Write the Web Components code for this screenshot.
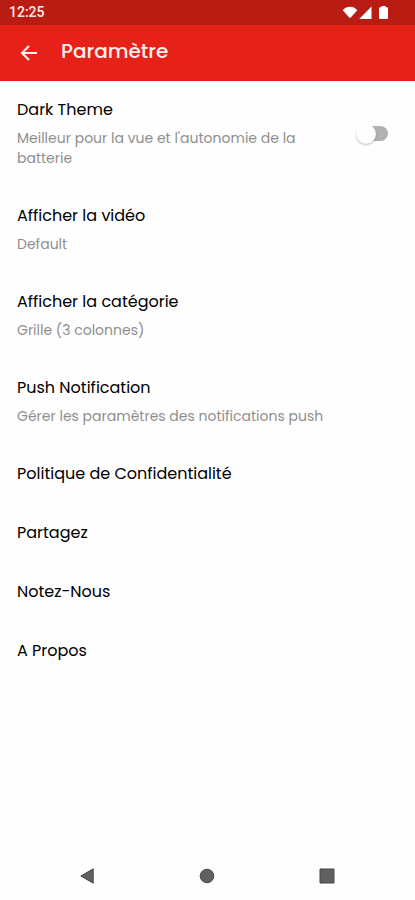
<!DOCTYPE html>
<html lang="fr">
<head>
<meta charset="utf-8">
<meta name="viewport" content="width=device-width, initial-scale=1">
<title>Paramètre</title>
<style>
body { margin: 0; background: #fefefe; color: #000; font-family: Poppins, Inter, "Open Sans", sans-serif; }
</style>
</head>
<body>
<settings-screen></settings-screen>
<script>
const define = (name, html) => {
  const template = document.createElement('template');
  template.innerHTML = html;
  customElements.define(name, class extends HTMLElement {
    constructor() {
      super();
      this.attachShadow({ mode: 'open' }).append(template.content.cloneNode(true));
    }
  });
};

define('status-bar', `
<style>
:host { display: flex; align-items: center; justify-content: space-between; height: 25px; padding: 0 27px 0 9px; background: #b81c13; color: #ffe9e6; font: 500 14px/25px Roboto, sans-serif; }
svg { display: block; }
</style>
<span>12:25</span>
<svg width="46" height="15" viewBox="0 0 46 15" fill="#fff" aria-hidden="true">
  <path d="M.7 5.2C4.7 .7 11.3 .7 15.3 5.2L9 12.2Q8 13.3 7 12.2Z"/>
  <path d="M29.5 1.5V14H17.2Z"/>
  <path d="M38 2.2h1.5V1h4v1.2H45q1 0 1 1V13q0 1-1 1h-7q-1 0-1-1V3.2q0-1 1-1Z"/>
</svg>`);

define('app-bar', `
<style>
:host { display: flex; align-items: center; height: 56px; padding: 0 17px; gap: 20px; background: #e62117; color: #fff0ee; box-sizing: border-box; }
button { display: grid; place-items: center; width: 24px; height: 24px; padding: 0; border: 0; background: none; color: inherit; }
h1 { margin: 0; padding-bottom: 4px; font-size: 20px; line-height: 28px; font-weight: 500; }
</style>
<button type="button" aria-label="Retour"><svg width="24" height="24" viewBox="0 0 24 24" fill="none" stroke="currentColor" stroke-width="2.2"><path d="M20 12H5M12 5L5 12l7 7"/></svg></button>
<h1><slot></slot></h1>`);

define('setting-row', `
<style>
:host { display: block; }
button { display: block; width: 100%; padding: 17px 17px 18px; border: 0; background: none; color: inherit; font: inherit; text-align: left; }
.title { display: block; font-size: 16px; line-height: 24px; font-weight: 400; }
::slotted([slot=detail]) { display: block; padding: 6px 0 1px; font-size: 14px; line-height: 20px; color: #8e8e8e; }
</style>
<button type="button"><span class="title"><slot></slot></span><slot name="detail"></slot></button>`);

define('setting-switch', `
<style>
:host { display: block; }
label { display: flex; align-items: center; justify-content: space-between; gap: 32px; padding: 17px 27px 18px 17px; }
.title { display: block; font-size: 16px; line-height: 24px; font-weight: 400; }
::slotted([slot=detail]) { display: block; padding: 6px 0 1px; font-size: 14px; line-height: 20px; color: #8e8e8e; }
input { appearance: none; flex: none; display: flex; align-items: center; position: relative; width: 32px; height: 20px; margin: 0; }
input::before { content: ""; position: absolute; right: 0; width: 26px; height: 15px; border-radius: 8px; background: #b1b1b1; }
input::after { content: ""; position: relative; width: 20px; height: 20px; border-radius: 50%; background: #fdfdfd; box-shadow: 0 1px 2px #0004; }
input:checked::after { margin-left: auto; background: #e62117; }
</style>
<label><span><span class="title"><slot></slot></span><slot name="detail"></slot></span><input type="checkbox" role="switch"></label>`);

define('system-nav', `
<style>
:host { display: grid; grid-template-columns: repeat(3, 1fr); height: 48px; padding: 0 28px; }
button { display: grid; place-items: center; padding: 0; border: 0; background: none; }
svg { display: block; fill: #606060; stroke: #484848; }
</style>
<button type="button" aria-label="Précédent"><svg width="16" height="16" viewBox="0 0 16 16"><path d="M13.2 .8V15.2L0.8 8Z"/></svg></button>
<button type="button" aria-label="Accueil"><svg width="16" height="16" viewBox="0 0 16 16"><circle cx="8" cy="8" r="6.8"/></svg></button>
<button type="button" aria-label="Applications récentes"><svg width="16" height="16" viewBox="0 0 16 16"><path d="M1 1h14v14H1Z"/></svg></button>`);

define('settings-screen', `
<style>
:host { display: flex; flex-direction: column; min-height: 100vh; }
main { flex: 1; }
</style>
<status-bar></status-bar>
<app-bar>Paramètre</app-bar>
<main>
  <setting-switch>Dark Theme<span slot="detail">Meilleur pour la vue et l'autonomie de la batterie</span></setting-switch>
  <setting-row>Afficher la vidéo<span slot="detail">Default</span></setting-row>
  <setting-row>Afficher la catégorie<span slot="detail">Grille (3 colonnes)</span></setting-row>
  <setting-row>Push Notification<span slot="detail">Gérer les paramètres des notifications push</span></setting-row>
  <setting-row>Politique de Confidentialité</setting-row>
  <setting-row>Partagez</setting-row>
  <setting-row>Notez-Nous</setting-row>
  <setting-row>A Propos</setting-row>
</main>
<system-nav></system-nav>`);
</script>
</body>
</html>
